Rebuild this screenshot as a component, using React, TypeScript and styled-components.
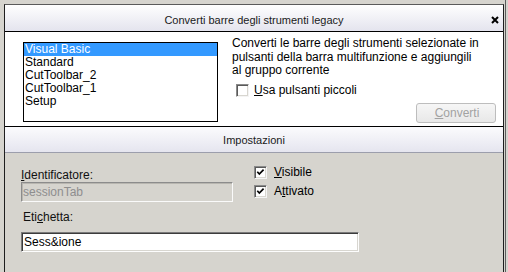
import React from 'react';
import styled, { createGlobalStyle } from 'styled-components';

const Global = createGlobalStyle`
  html, body { margin: 0; padding: 0; background: #d6d4ce; }
  body {
    font-family: "Liberation Sans", Arial, sans-serif;
    font-size: 12px;
    color: #000;
  }
`;

const Frame = styled.div`
  box-sizing: border-box;
  width: 506px;
  height: 272px;
  padding: 4px 0 0 4px;
  border-right: 1px solid #5c5c5c;
  overflow: hidden;
`;

const Dialog = styled.div`
  box-sizing: border-box;
  width: 500px;
  height: 268px;
  border-top: 1px solid #5a5a5a;
  border-left: 1px solid #1e1e1e;
  border-right: 1px solid #1e1e1e;
  display: flex;
  flex-direction: column;
  background: #d6d4ce;
`;

const TitleBar = styled.div`
  box-sizing: border-box;
  height: 27px;
  flex: none;
  border-bottom: 1px solid #000;
  background: linear-gradient(#fefefe, #e4e4ee);
  display: grid;
  grid-template-columns: 1fr auto 1fr;
  align-items: center;
  padding-top: 3px;
`;

const Title = styled.div`
  grid-column: 2;
  font-size: 11px;
  color: #1a1a1a;
  white-space: nowrap;
`;

const Close = styled.div`
  grid-column: 3;
  justify-self: end;
  margin-right: 4px;
  width: 8px;
  height: 8px;
  display: flex;
`;

const TopPanel = styled.div`
  box-sizing: border-box;
  height: 95px;
  flex: none;
  background: #fff;
  border-bottom: 1px solid #000;
  display: flex;
  align-items: flex-start;
  padding-left: 18px;
  padding-right: 7px;
`;

const ListBox = styled.div`
  box-sizing: border-box;
  width: 195px;
  height: 80px;
  margin-top: 10px;
  border: 1px solid #000;
  background: #fff;
  display: flex;
  flex-direction: column;
  flex: none;
`;

const ListItem = styled.div<{ $selected?: boolean }>`
  height: 13px;
  line-height: 13px;
  padding-left: 1px;
  white-space: nowrap;
  color: ${(p) => (p.$selected ? '#fff' : '#000')};
  background: ${(p) => (p.$selected ? '#3399ff' : 'transparent')};
`;

const RightCol = styled.div`
  flex: 1;
  margin-left: 14px;
  margin-top: 5px;
  display: flex;
  flex-direction: column;
`;

const Description = styled.div`
  line-height: 13.5px;
  white-space: nowrap;
`;

const CheckRow = styled.label<{ $gap: number; $indent: number; $top?: number }>`
  display: flex;
  align-items: center;
  gap: ${(p) => p.$gap}px;
  margin-left: ${(p) => p.$indent}px;
  margin-top: ${(p) => p.$top ?? 0}px;
  height: 13px;
  line-height: 13px;
  white-space: nowrap;
`;

const Box = styled.span`
  box-sizing: border-box;
  width: 13px;
  height: 13px;
  flex: none;
  border: 1px solid;
  border-color: #8a8a8a #f4f4f4 #f4f4f4 #8a8a8a;
  box-shadow: inset 1px 1px #5a5a5a, inset -1px -1px #d8d6d0;
  background: #fff;
  display: flex;
`;

const U = styled.span`
  text-decoration: underline;
  text-underline-offset: 1px;
`;

const Button = styled.div`
  align-self: flex-end;
  box-sizing: border-box;
  width: 80px;
  height: 20px;
  margin-top: 6px;
  border: 1px solid #bdbdbd;
  border-radius: 3px;
  background: linear-gradient(#f6f6f6, #e8e8e8);
  color: #a2a2a2;
  display: flex;
  align-items: center;
  justify-content: center;
  padding-left: 2px;
`;

const SectionHeader = styled.div`
  box-sizing: border-box;
  height: 26px;
  flex: none;
  background: linear-gradient(#fbfbfd, #e5e5ef);
  border-bottom: 1px solid #9c9eac;
  display: flex;
  align-items: center;
  justify-content: center;
  font-size: 11px;
  color: #1a1a1a;
  padding-top: 1px;
`;

const Body = styled.div`
  flex: 1;
  padding: 13px 0 0 16px;
  display: flex;
  flex-direction: column;
`;

const TopRow = styled.div`
  display: flex;
  align-items: flex-start;
`;

const Field = styled.div`
  display: flex;
  flex-direction: column;
  width: 212px;
`;

const Label = styled.div<{ $indent?: number; $top: number }>`
  height: 14px;
  line-height: 14px;
  margin-top: ${(p) => p.$top}px;
  margin-left: ${(p) => p.$indent ?? 0}px;
  color: #111;
  white-space: nowrap;
`;

const Input = styled.div<{ $disabled?: boolean; $width: number; $top?: number }>`
  box-sizing: border-box;
  width: ${(p) => p.$width}px;
  height: 20px;
  margin-top: ${(p) => p.$top ?? 0}px;
  border: 1px solid;
  border-color: ${(p) =>
    p.$disabled ? '#8c8c8c #fafafa #fafafa #8c8c8c' : '#7a7a7a #fdfdfd #fdfdfd #7a7a7a'};
  box-shadow: ${(p) =>
    p.$disabled ? 'inset 1px 1px #b8b6b0' : 'inset 1px 1px #3c3c3c, inset -1px -1px #d8d6d0'};
  background: ${(p) => (p.$disabled ? '#d6d4ce' : '#fff')};
  color: ${(p) => (p.$disabled ? '#8e8e8e' : '#000')};
  padding-left: ${(p) => (p.$disabled ? 1 : 2)}px;
  display: flex;
  align-items: center;
  white-space: nowrap;
`;

const Checks = styled.div`
  margin-left: 21px;
  display: flex;
  flex-direction: column;
  gap: 6px;
`;

const Check = ({ checked }: { checked?: boolean }) => (
  <Box>
    {checked && (
      <svg width="11" height="11" viewBox="0 0 11 11">
        <polyline points="2.3,4.8 4.3,7 8.6,2.6" fill="none" stroke="#000" strokeWidth="1.7" />
      </svg>
    )}
  </Box>
);

export default function App() {
  return (
    <>
      <Global />
      <Frame>
        <Dialog>
          <TitleBar>
            <Title>Converti barre degli strumenti legacy</Title>
            <Close>
              <svg width="8" height="8" viewBox="0 0 8 8">
                <path d="M1 1 L7 7 M7 1 L1 7" stroke="#000" strokeWidth="2" />
              </svg>
            </Close>
          </TitleBar>
          <TopPanel>
            <ListBox>
              <ListItem $selected>Visual Basic</ListItem>
              <ListItem>Standard</ListItem>
              <ListItem>CutToolbar_2</ListItem>
              <ListItem>CutToolbar_1</ListItem>
              <ListItem>Setup</ListItem>
            </ListBox>
            <RightCol>
              <Description>
                Converti le barre degli strumenti selezionate in
                <br />
                pulsanti della barra multifunzione e aggiungili
                <br />
                al gruppo corrente
              </Description>
              <CheckRow $gap={5} $indent={4} $top={6}>
                <Check />
                <span>
                  <U>U</U>sa pulsanti piccoli
                </span>
              </CheckRow>
              <Button>
                <span>
                  <U>C</U>onverti
                </span>
              </Button>
            </RightCol>
          </TopPanel>
          <SectionHeader>Impostazioni</SectionHeader>
          <Body>
            <TopRow>
              <Field>
                <Label $top={2}>
                  <U>I</U>dentificatore:
                </Label>
                <Input $disabled $width={212}>sessionTab</Input>
              </Field>
              <Checks>
                <CheckRow $gap={7} $indent={0}>
                  <Check checked />
                  <span>
                    <U>V</U>isibile
                  </span>
                </CheckRow>
                <CheckRow $gap={7} $indent={0}>
                  <Check checked />
                  <span>
                    A<U>t</U>tivato
                  </span>
                </CheckRow>
              </Checks>
            </TopRow>
            <Label $top={8} $indent={2}>
              Eti<U>c</U>hetta:
            </Label>
            <Input $width={338} $top={8}>Sess&amp;ione</Input>
          </Body>
        </Dialog>
      </Frame>
    </>
  );
}
